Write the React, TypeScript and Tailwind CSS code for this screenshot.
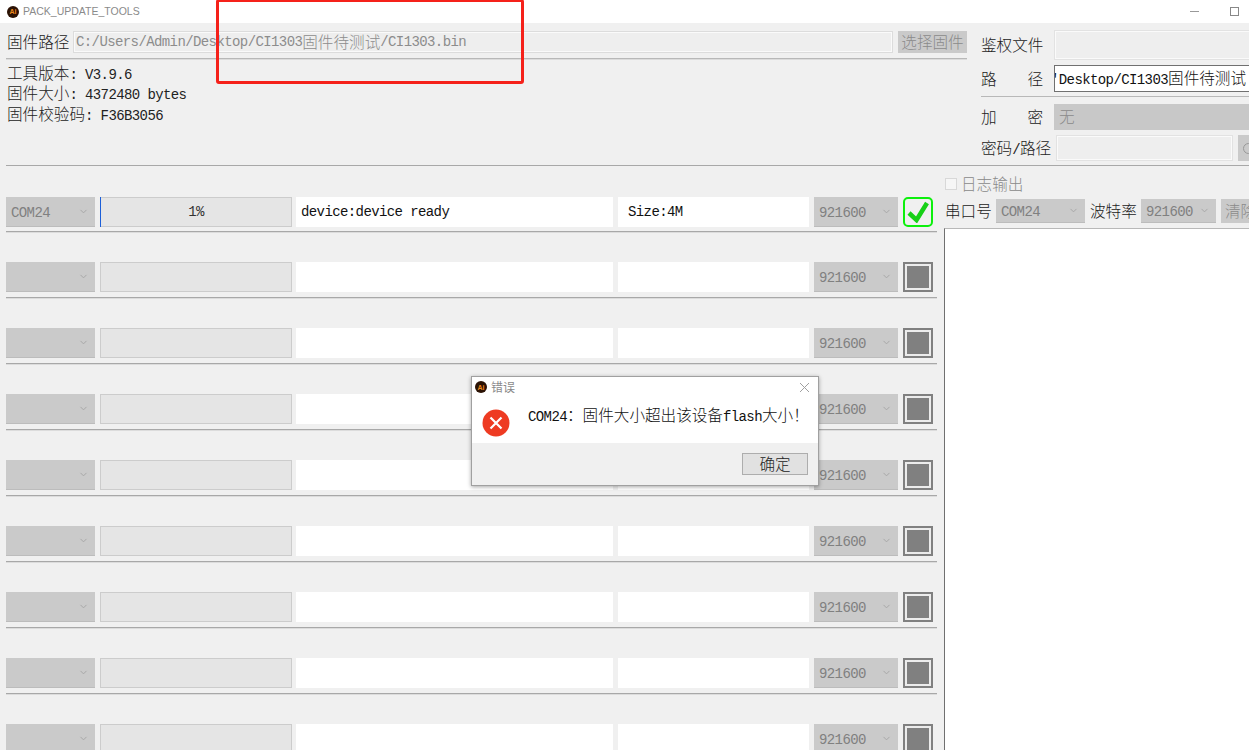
import { ChevronDown } from "lucide-react";

const CJK_FONT = "font-['Noto_Sans_CJK_SC',sans-serif]";

// Latin glyphs are half the width of the CJK ones, so each run gets its own font
function Mix({ text }: { text: string }) {
  const parts = text.match(/[\u3000-\u9fff\uff00-\uffef]+|[^\u3000-\u9fff\uff00-\uffef]+/g) ?? [];
  return (
    <>
      {parts.map((part, i) =>
        /[\u3000-\u9fff\uff00-\uffef]/.test(part) ? (
          <span key={i} className={`${CJK_FONT} text-[15.6px] font-light`}>
            {part}
          </span>
        ) : (
          <span key={i} className="font-['Liberation_Mono',monospace] text-[14px] tracking-[-0.6px]">
            {part}
          </span>
        ),
      )}
    </>
  );
}

function Combo({ value, className }: { value?: string; className: string }) {
  return (
    <div
      className={`flex items-center justify-between bg-[#cacaca] border-b border-[#bcbcbc] pl-[5px] pr-[6px] text-[#808080] ${className}`}
    >
      <span>{value ? <Mix text={value} /> : null}</span>
      <ChevronDown size={11} className="text-[#a4a4a4]" />
    </div>
  );
}

function AppLogo() {
  return (
    <div className="w-3 h-3 rounded-full bg-[#2b1204] flex items-center justify-center text-[7px] font-bold leading-none text-[#f08a1c] font-['Liberation_Sans',sans-serif] shrink-0">
      Ai
    </div>
  );
}

function Indicator({ ok }: { ok: boolean }) {
  if (ok) {
    return (
      <div className="w-[30px] h-[30px] border-2 border-[#0cf00c] rounded-[5px] flex items-center justify-center">
        <svg width="22" height="22" viewBox="0 0 22 22">
          <path d="M2 12 L9.5 19 L20 2" fill="none" stroke="#16d016" strokeWidth="4.5" />
        </svg>
      </div>
    );
  }
  return (
    <div className="w-[30px] h-[30px] border-2 border-[#808080] p-[2px] bg-[#ececec]">
      <div className="w-full h-full bg-[#808080]" />
    </div>
  );
}

type RowData = { com?: string; progress?: string; status?: string; size?: string; ok?: boolean };

function DeviceRow({ com, progress, status, size, ok = false, first }: RowData & { first: boolean }) {
  return (
    <div className={`${first ? "pt-[31px] pb-[4px]" : "pt-[30px] pb-[5px]"} border-b border-[#a8a8a8] shadow-[0_1px_0_#dcdcdc]`}>
      <div className="h-[30px] flex gap-[5px]">
        <Combo value={com} className="w-[89px]" />
        <div className="relative w-[192px] bg-[#e5e5e5] border border-[#cccccc] flex items-center justify-center text-[#333]">
          {progress ? (
            <>
              <div className="absolute left-[-1px] top-[-1px] bottom-[-1px] w-[1px] bg-[#1c5fd8]" />
              <Mix text={progress} />
            </>
          ) : null}
        </div>
        <div className="w-[317px] ml-[-1px] bg-white flex items-center pl-[5px] text-[#111]">
          {status ? <Mix text={status} /> : null}
        </div>
        <div className="w-[191px] bg-white flex items-center pl-[10px] text-[#111]">
          {size ? <Mix text={size} /> : null}
        </div>
        <Combo value="921600" className="w-[84px]" />
        <Indicator ok={ok} />
      </div>
    </div>
  );
}

function Field({ label, children }: { label: string; children: React.ReactNode }) {
  return (
    <div className="flex items-center">
      <div className="w-[73px] shrink-0 flex justify-between pr-[11px] text-[#222] whitespace-nowrap">
        {label.split(" ").map((part, i) => (
          <span key={i}>
            <Mix text={part} />
          </span>
        ))}
      </div>
      {children}
    </div>
  );
}

const rows: RowData[] = [
  { com: "COM24", progress: "1%", status: "device:device ready", size: "Size:4M", ok: true },
  {},
  {},
  {},
  {},
  {},
  {},
  {},
  {},
];

export default function App() {
  return (
    <div className="relative w-[1249px] h-[750px] overflow-hidden bg-[#f0f0f0] flex flex-col leading-none">
      {/* title bar */}
      <div className="h-[23px] shrink-0 bg-white flex items-center pl-[7px] pr-[10px]">
        <AppLogo />
        <span className="ml-[4px] text-[10.5px] text-[#8a8a8a] font-['Liberation_Sans',sans-serif]">
          PACK_UPDATE_TOOLS
        </span>
        <div className="ml-auto flex items-center gap-[31px]">
          <div className="w-[9px] h-px bg-[#999]" />
          <div className="w-[9px] h-[9px] border border-[#888]" />
        </div>
      </div>

      {/* firmware and auth section */}
      <div className="h-[143px] shrink-0 ml-[6px] flex border-b border-[#a8a8a8]">
        <div className="w-[961px] shrink-0 pt-[7px]">
          <div className="h-[23px] flex items-center">
            <span className="ml-[1px] w-[66px] text-[#222]">
              <Mix text="固件路径" />
            </span>
            <div className="w-[820px] h-[22px] bg-[#eeeeee] border-2 border-[#fafafa] outline outline-[#dcdcdc] -outline-offset-1 flex items-center pl-[1px] text-[#8c8c8c]">
              <Mix text="C:/Users/Admin/Desktop/CI1303固件待测试/CI1303.bin" />
            </div>
            <div className="ml-[5px] w-[69px] h-[22px] bg-[#cacaca] flex items-center justify-center text-[#8a8a8a]">
              <Mix text="选择固件" />
            </div>
          </div>
          <div className="mt-[5px] border-b border-t-0 border-[#b8b8b8] h-[1px] shadow-[0_1px_0_#dcdcdc]" />
          <div className="mt-[6px] ml-[1px] flex flex-col gap-[4.5px] text-[#222]">
            <div className="h-[16px] flex items-center"><span><Mix text="工具版本: V3.9.6" /></span></div>
            <div className="h-[16px] flex items-center"><span><Mix text="固件大小: 4372480 bytes" /></span></div>
            <div className="h-[16px] flex items-center"><span><Mix text="固件校验码: F36B3056" /></span></div>
          </div>
        </div>

        <div className="ml-[5px] mt-[7px] h-[130px] w-px bg-[#bdbdbd] shadow-[1px_0_0_#fafafa]" />

        <div className="ml-[9px] w-[320px] shrink-0 pt-[7px]">
          <Field label="鉴权文件">
            <div className="w-[240px] h-[30px] border-2 border-[#fafafa] outline outline-[#e2e2e2] -outline-offset-1 bg-[#eeeeee]" />
          </Field>
          <div className="mt-[5px]">
            <Field label="路 径">
              <div className="w-[240px] h-[27px] bg-white border border-[#707070] flex items-center overflow-hidden text-[#111] whitespace-nowrap">
                <span className="ml-[-4px]">
                  <Mix text="'Desktop/CI1303固件待测试" />
                </span>
              </div>
            </Field>
          </div>
          <div className="mt-[4px] h-px bg-[#b8b8b8]" />
          <div className="mt-[7px]">
            <Field label="加 密">
              <div className="w-[240px] h-[26px] bg-[#c8c8c8] flex items-center pl-[5px] text-[#8a8a8a]">
                <Mix text="无" />
              </div>
            </Field>
          </div>
          <div className="mt-[5px] flex items-center">
            <span className="w-[75px] shrink-0 text-[#222]">
              <Mix text="密码/路径" />
            </span>
            <div className="w-[177px] h-[26px] bg-[#eeeeee] border-2 border-[#fafafa] outline outline-[#e2e2e2] -outline-offset-1" />
            <div className="ml-[5px] w-[30px] h-[26px] bg-[#cacaca] flex items-center pl-[5px]">
              <div className="w-[11px] h-[11px] rounded-full border border-[#999]" />
            </div>
          </div>
        </div>
      </div>

      {/* device rows and log */}
      <div className="flex min-h-0 flex-1 ml-[6px]">
        <div className="w-[931px] shrink-0">
          {rows.map((row, i) => (
            <DeviceRow key={i} first={i === 0} {...row} />
          ))}
        </div>

        <div className="ml-[7px] w-[320px] shrink-0 flex flex-col">
          <div className="mt-[10px] h-[15px] flex items-center">
            <div className="ml-px w-[12px] h-[12px] bg-[#f6f6f6] border border-[#d8d8d8]" />
            <span className="ml-[4px] text-[#8a8a8a]">
              <Mix text="日志输出" />
            </span>
          </div>
          <div className="mt-[8px] h-[24px] flex items-center">
            <span className="ml-px w-[51px] text-[#222]">
              <Mix text="串口号" />
            </span>
            <Combo value="COM24" className="w-[89px] h-[24px]" />
            <span className="ml-[5px] w-[51px] text-[#222]">
              <Mix text="波特率" />
            </span>
            <Combo value="921600" className="w-[75px] h-[24px]" />
            <div className="ml-[5px] w-[40px] h-[24px] bg-[#cacaca] flex items-center pl-[4px] text-[#8a8a8a]">
              <Mix text="清除" />
            </div>
          </div>
          <div className="mt-[5px] flex-1 bg-white border-l border-t border-l-[#707070] border-t-[#b8b8b8]" />
        </div>
      </div>

      {/* red annotation drawn over the screenshot */}
      <div className="absolute left-[216px] top-[-1px] w-[308px] h-[85px] border-[3px] border-[#f5211a] rounded-[3px]" />

      {/* error dialog */}
      <div className="absolute left-[471px] top-[376px] w-[348px] h-[110px] bg-white border border-[#a0a0a0] shadow-[0_1px_4px_rgba(0,0,0,0.35)] flex flex-col">
        <div className="h-[20px] flex items-center pl-[3px] pr-[8px]">
          <AppLogo />
          <span className="ml-[4px] text-[#8a8a8a] text-[12px] font-['Noto_Sans_CJK_SC',sans-serif]">错误</span>
          <svg className="ml-auto" width="11" height="11" viewBox="0 0 11 11">
            <path d="M1 1 L10 10 M10 1 L1 10" stroke="#a0a0a0" strokeWidth="1" />
          </svg>
        </div>
        <div className="h-[46px] flex items-center pl-[10px]">
          <svg width="28" height="28" viewBox="0 0 28 28" className="mt-[5px] shrink-0">
            <circle cx="14" cy="14" r="13.5" fill="#ee3b22" />
            <path d="M8.5 8.5 L19.5 19.5 M19.5 8.5 L8.5 19.5" stroke="#fff" strokeWidth="2.2" />
          </svg>
          <span className="ml-[18px] mb-[9px] text-[#111] whitespace-nowrap">
            <Mix text="COM24：固件大小超出该设备flash大小！" />
          </span>
        </div>
        <div className="flex-1 bg-[#f0f0f0] flex items-center justify-end pr-[10px]">
          <div className="w-[66px] h-[22px] bg-[#e1e1e1] border border-[#adadad] flex items-center justify-center text-[#222]">
            <Mix text="确定" />
          </div>
        </div>
      </div>
    </div>
  );
}
